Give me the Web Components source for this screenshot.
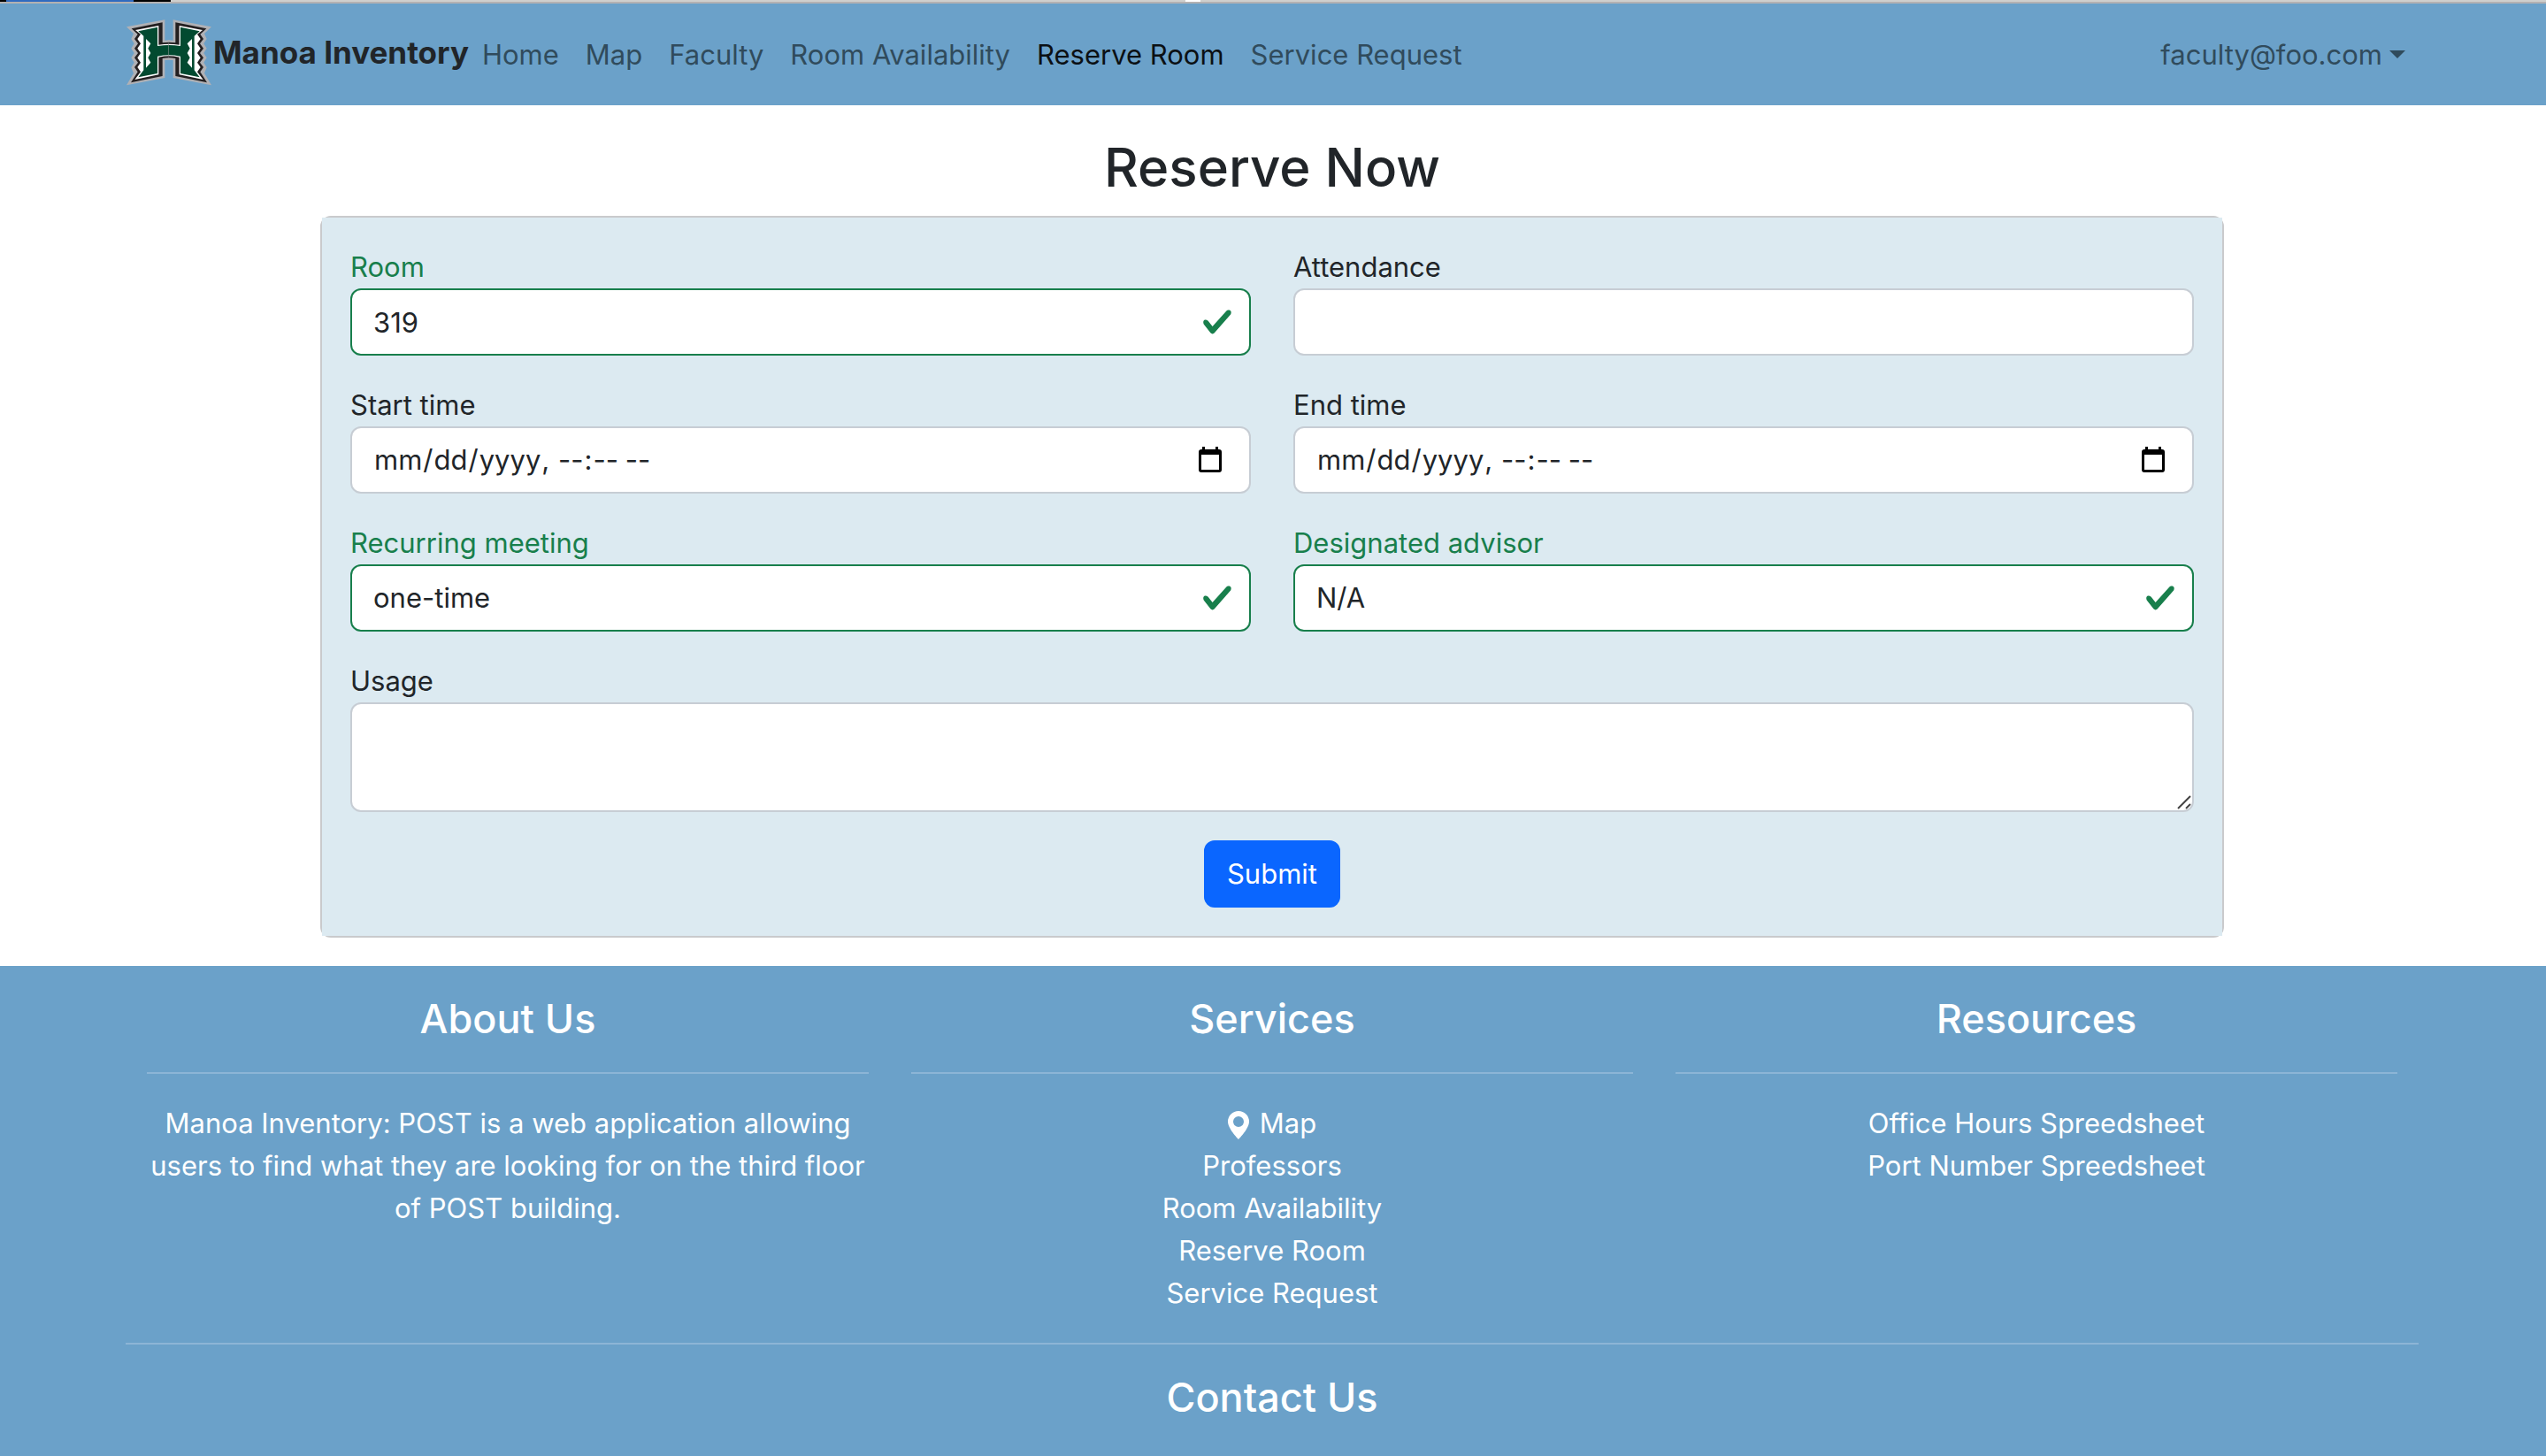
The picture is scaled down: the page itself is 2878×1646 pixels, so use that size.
<!DOCTYPE html>
<html lang="en-US">
<head>
<meta charset="utf-8">
<title>Manoa Inventory</title>
<style>
  :root {
    --blue: #6ba1c9;
    --ink: #212529;
    --valid: #187f4c;
    --field-border: #c7cdd4;
    --text: 31px;
    --line: 48px;
    --edge: 2px;
  }
  body {
    margin: 0;
    background: #fff;
    color: var(--ink);
    font: 400 var(--text)/var(--line) Inter, "Liberation Sans", sans-serif;
  }
</style>
</head>
<body>
<manoa-app></manoa-app>

<script>
const define = (name, html, setup) => {
  const template = document.createElement('template');
  template.innerHTML = html;
  customElements.define(name, class extends HTMLElement {
    constructor() {
      super();
      this.attachShadow({ mode: 'open' }).append(template.content.cloneNode(true));
    }
    connectedCallback() {
      if (setup) setup(this, this.shadowRoot);
    }
  });
};

/* Sliver of the browser's own chrome above the page */
define('window-edge', `
  <style>
    :host { display: block; height: 2px; border-bottom: 2px solid #b3b1b2;
      background: linear-gradient(90deg, #000 0 7px, #2f6bc0 7px 151px, #000 151px 193px, #cfcfcd 193px 1340px, #fff 1340px 1357px, #cfcfcd 1357px); }
  </style>`);

define('h-logo', `
  <style>
    :host { display: block; width: 98px; height: 78px; }
    svg { display: block; width: 100%; height: 100%; }
  </style>
  <svg viewBox="39 60 294 234" aria-hidden="true">
    <defs>
      <g id="half">
        <path fill="#b0b1b5" d="M42 91 172 67V137Q180 136 187 136V203Q180 203 172 204V264L42 289 66 248 58 229 68 212 58 196 68 180 58 164 68 148 58 132 66 114Z"/>
        <path fill="#231f20" d="M59 97 164 76V145Q176 143 187 143V196Q176 196 164 198V258L57 280 80 244 69 228 81 212 69 196 81 180 69 164 81 148 69 132 80 116Z"/>
        <path fill="#fff" d="M72 102 151 87V152Q170 149 187 149V190Q170 190 151 194V253L70 270 90 244 79 228 90 212 79 196 90 180 79 164 90 148 79 132 90 116Z"/>
        <path fill="#024a30" d="M82 106 147 92V156Q168 153 187 153V187Q168 187 147 191V249L82 262 100 238V122Z"/>
        <path fill="#fff" d="M108 132 124 148 115 164 124 180 115 196 124 212 108 230Z"/>
      </g>
    </defs>
    <use href="#half"/>
    <use href="#half" transform="translate(372 0) scale(-1 1)"/>
  </svg>`);

define('nav-link', `
  <style>
    :host { display: block; }
    a { display: flex; align-items: center; gap: 8px; padding: 15px; color: #304b5c; text-decoration: none; }
    :host([active]) a { color: #0b1014; }
    i { display: none; width: 0; border: 9px solid transparent; border-top-color: currentColor; border-bottom: 0; }
    :host([caret]) i { display: block; }
  </style>
  <a href="#"><slot></slot><i></i></a>`);

define('site-nav', `
  <style>
    :host { display: block; padding-right: var(--edge); background: var(--blue); }
    nav { display: flex; align-items: center; max-width: 2592px; height: 83px; margin: 0 auto; padding: 16px 24px; }
    .brand { display: flex; align-items: center; gap: 1px; padding-bottom: 5px; color: var(--ink);
      font-size: 35px; font-weight: 700; text-decoration: none; }
    .links { display: flex; flex: 1; }
    .user { margin-left: auto; }
  </style>
  <nav>
    <a class="brand" href="#"><h-logo></h-logo><span>Manoa Inventory</span></a>
    <div class="links">
      <nav-link>Home</nav-link>
      <nav-link>Map</nav-link>
      <nav-link>Faculty</nav-link>
      <nav-link>Room Availability</nav-link>
      <nav-link active>Reserve Room</nav-link>
      <nav-link>Service Request</nav-link>
      <nav-link class="user" caret>faculty@foo.com</nav-link>
    </div>
  </nav>`);

const controls = {
  text: '<input id="control" type="text">',
  datetime: '<input id="control" type="datetime-local">',
  select: '<select id="control"><option></option></select>',
  textarea: '<textarea id="control"></textarea>'
};

define('form-field', `
  <style>
    :host { display: block; }
    label { display: block; }
    .box { display: grid; }
    .box > * { grid-area: 1 / 1; }
    input, select, textarea {
      appearance: none; box-sizing: border-box; display: block; width: 100%; height: 76px; margin: 0; padding: 12px 24px;
      border: 2px solid var(--field-border); border-radius: 12px; background: #fff; color: var(--ink);
      font: inherit; line-height: var(--line);
    }
    textarea { height: 124px; resize: vertical; }
    textarea::-webkit-resizer { background: none; }
    ::-webkit-datetime-edit { padding: 0; }
    ::-webkit-datetime-edit-fields-wrapper { padding: 0; }
    ::-webkit-calendar-picker-indicator { width: 32px; height: 32px; padding: 4px; margin: 0; opacity: 0; }
    svg { display: none; align-self: center; justify-self: end; pointer-events: none; }
    .check { width: 36px; height: 36px; margin-right: 20px; fill: var(--valid); }
    .calendar { width: 26px; height: 29px; margin-right: 33px; margin-bottom: 2px; }
    .grip { align-self: end; width: 16px; height: 16px; margin: 3px; stroke: #444; stroke-width: 2; }
    :host([valid]) label { color: var(--valid); }
    :host([valid]) input, :host([valid]) select { border-color: var(--valid); }
    :host([valid]) .check, :host([kind=datetime]) .calendar, :host([kind=textarea]) .grip { display: block; }
  </style>
  <label for="control"><slot></slot></label>
  <div class="box">
    <svg class="check" viewBox="0 0 8 8"><path d="M2.3 6.73.6 4.53c-.4-1.04.46-1.4 1.1-.8l1.1 1.4 3.4-3.8c.6-.63 1.6-.27 1.2.7l-4 4.6c-.43.5-.8.4-1.1.1z"/></svg>
    <svg class="calendar" viewBox="0 0 26 29"><path fill-rule="evenodd" d="M4 0h3v3h12V0h3v3h1q3 0 3 3v20q0 3-3 3H3q-3 0-3-3V6q0-3 3-3h1zM3 9v17h20V9z"/></svg>
    <svg class="grip" viewBox="0 0 16 16"><path d="M1 15 15 1M10 15l5-5"/></svg>
  </div>`, (host, root) => {
  const box = root.querySelector('.box');
  if (box.querySelector('#control')) return;
  box.insertAdjacentHTML('afterbegin', controls[host.getAttribute('kind') || 'text']);
  const control = box.firstElementChild;
  const value = host.getAttribute('value');
  if (!value) return;
  if (control.options) control.options[0].text = value;
  else control.value = value;
});

define('reserve-form', `
  <style>
    :host { display: block; border: 2px solid #c9cacc; border-radius: 12px; }
    form { display: grid; grid-template-columns: 1fr 1fr; gap: 32px 48px; padding: 32px; background: #dceaf1; }
    .wide { grid-column: 1 / -1; }
    button { justify-self: center; padding: 12px 24px; border: 2px solid #0a66ff; border-radius: 12px; background: #0a66ff;
      color: #fff; font: inherit; cursor: pointer; }
  </style>
  <form>
    <form-field valid value="319">Room</form-field>
    <form-field>Attendance</form-field>
    <form-field kind="datetime">Start time</form-field>
    <form-field kind="datetime">End time</form-field>
    <form-field kind="select" valid value="one-time">Recurring meeting</form-field>
    <form-field kind="select" valid value="N/A">Designated advisor</form-field>
    <form-field class="wide" kind="textarea">Usage</form-field>
    <button class="wide" type="button">Submit</button>
  </form>`);

define('footer-column', `
  <style>
    :host { display: block; flex: 1; padding: 0 24px; }
    h4 { margin: 0; font-size: 45px; font-weight: 500; line-height: 56px; }
    hr { height: 2px; margin: 32px 0; border: 0; background: #8cb5d6; }
  </style>
  <h4><slot name="title"></slot></h4>
  <hr>
  <slot></slot>`);

define('site-footer', `
  <style>
    :host { display: block; flex: 1 0 auto; padding: 32px var(--edge) 48px 0; background: var(--blue); color: #fff; text-align: center; }
    .inner { max-width: 2592px; margin: 0 auto; }
    .columns { display: flex; }
    p { margin: 0; }
    a { display: block; color: inherit; text-decoration: none; }
    .pin { width: 24px; height: 32px; margin-right: 12px; vertical-align: -7px; fill: currentColor; }
    hr { height: 2px; margin: 32px 0; border: 0; background: #8cb5d6; }
    h4 { margin: 0; font-size: 45px; font-weight: 500; line-height: 56px; }
  </style>
  <footer class="inner">
    <div class="columns">
      <footer-column><span slot="title">About Us</span>
        <p>Manoa Inventory: POST is a web application allowing users to find what they are looking for on the third floor of POST building.</p>
      </footer-column>
      <footer-column><span slot="title">Services</span>
        <a href="#"><svg class="pin" viewBox="0 0 24 32" aria-hidden="true"><path fill-rule="evenodd" d="M12 32S0 20 0 12a12 12 0 0 1 24 0c0 8-12 20-12 20zm0-14a6 6 0 1 0 0-12 6 6 0 0 0 0 12z"/></svg>Map</a>
        <a href="#">Professors</a>
        <a href="#">Room Availability</a>
        <a href="#">Reserve Room</a>
        <a href="#">Service Request</a>
      </footer-column>
      <footer-column><span slot="title">Resources</span>
        <a href="#">Office Hours Spreedsheet</a>
        <a href="#">Port Number Spreedsheet</a>
      </footer-column>
    </div>
    <hr>
    <h4>Contact Us</h4>
  </footer>`);

define('manoa-app', `
  <style>
    :host { display: flex; flex-direction: column; overflow: hidden; height: 100vh; }
    window-edge, site-nav, main { flex: none; }
    main { padding: 32px var(--edge) 32px 0; }
    .content { max-width: 2152px; margin: 0 auto; }
    h2 { margin: 0 0 16px; font-size: 60px; font-weight: 500; line-height: 77px; text-align: center; }
  </style>
  <window-edge></window-edge>
  <site-nav></site-nav>
  <main>
    <div class="content">
      <h2>Reserve Now</h2>
      <reserve-form></reserve-form>
    </div>
  </main>
  <site-footer></site-footer>`);
</script>
</body>
</html>
